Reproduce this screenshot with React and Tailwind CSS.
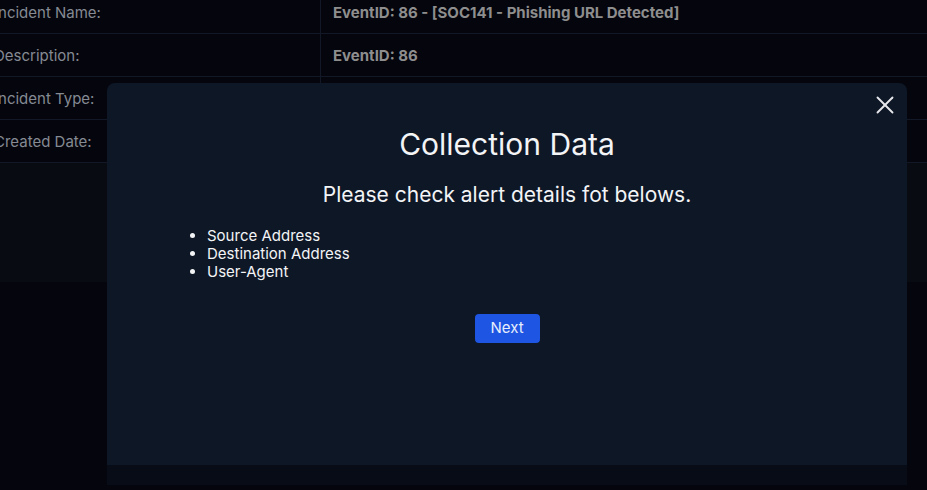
import { X } from 'lucide-react';

const rows = [
  { label: 'Incident Name:', value: 'EventID: 86 - [SOC141 - Phishing URL Detected]' },
  { label: 'Description:', value: 'EventID: 86' },
  { label: 'Incident Type:', value: 'Exchange' },
  { label: 'Created Date:', value: 'Mar, 22, 2021, 09:23 PM' },
];

const fields = ['Source Address', 'Destination Address', 'User-Agent'];

export default function App() {
  return (
    <div
      className="relative h-[490px] w-[927px] overflow-hidden bg-[#04050d]"
      style={{ fontFamily: 'Inter, "Open Sans", sans-serif' }}
    >
      {/* incident details table behind the modal */}
      <div className="-mt-[9px]">
        {rows.map((r) => (
          <div key={r.label} className="flex h-[43px] border-b border-[#121826]">
            <div className="-ml-[6px] w-[327px] shrink-0 border-r border-[#121826] pt-[11px] text-[15px] text-[#858a93]">
              {r.label}
            </div>
            <div className="pl-[12px] pt-[11px] text-[15px] font-bold text-[#8e8e8e]">{r.value}</div>
          </div>
        ))}
      </div>
      <div className="h-[119px] bg-[#080b12]" />

      {/* modal */}
      <div className="absolute left-[107px] top-[83px] flex h-[402px] w-[800px] flex-col rounded-t-[8px] bg-[#0e1726]">
        <button className="absolute right-[7px] top-[7px] text-[#e5e7eb]">
          <X size={30} strokeWidth={1.5} />
        </button>
        <div className="flex flex-1 flex-col px-[68px] text-[#f3f4f6]">
          <h2 className="mt-[42px] text-center text-[30px] leading-[38px]">Collection Data</h2>
          <p className="mt-[18px] text-center text-[21px] leading-[28px]">
            Please check alert details fot belows.
          </p>
          <ul className="mt-[18px] list-disc pl-[32px] text-[15px] leading-[18px]">
            {fields.map((f) => (
              <li key={f}>{f}</li>
            ))}
          </ul>
          <div className="mt-[33px] flex justify-center">
            <button className="h-[29px] w-[65px] rounded-[4px] bg-[#1e56e3] text-[15px] text-[#e8eefb]">
              Next
            </button>
          </div>
        </div>
        <div className="h-[20px] bg-[#070c17]" />
      </div>
    </div>
  );
}
